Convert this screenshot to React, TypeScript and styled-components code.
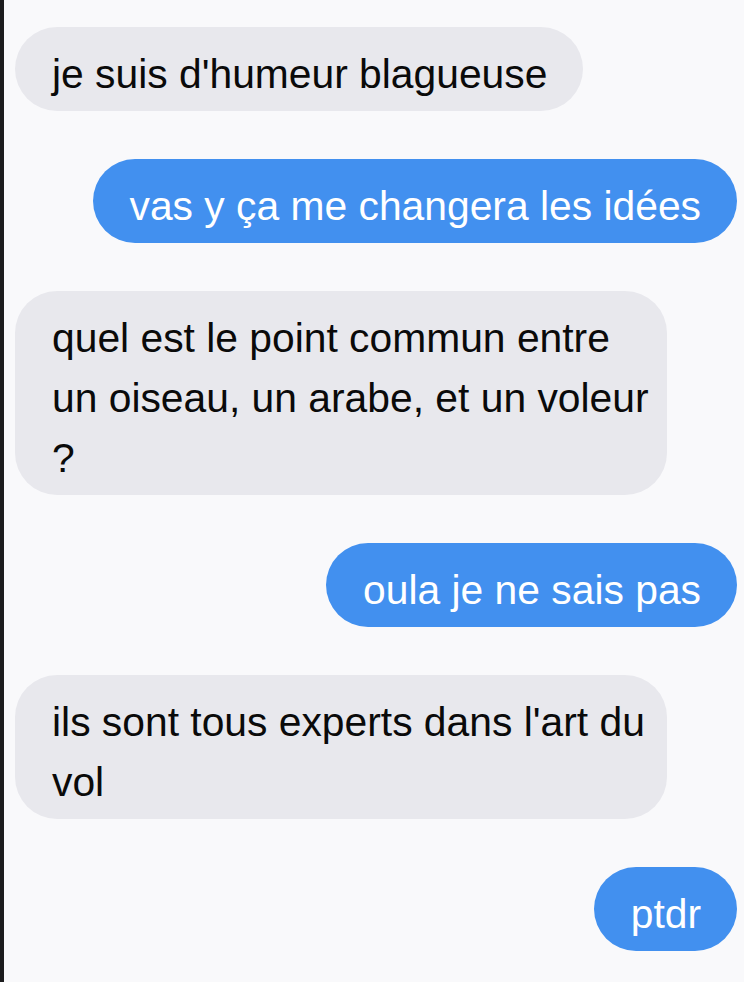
import * as React from "react";
import styled, { createGlobalStyle } from "styled-components";

type Message = {
  id: number;
  from: "me" | "them";
  text: string;
  multiline?: boolean;
};

const messages: Message[] = [
  { id: 1, from: "them", text: "je suis d'humeur blagueuse" },
  { id: 2, from: "me", text: "vas y ça me changera les idées" },
  {
    id: 3,
    from: "them",
    text: "quel est le point commun entre un oiseau, un arabe, et un voleur ?",
    multiline: true,
  },
  { id: 4, from: "me", text: "oula je ne sais pas" },
  {
    id: 5,
    from: "them",
    text: "ils sont tous experts dans l'art du vol",
    multiline: true,
  },
  { id: 6, from: "me", text: "ptdr" },
];

const GlobalStyle = createGlobalStyle`
  html, body {
    margin: 0;
    padding: 0;
    background: #f9f9fb;
  }

  body {
    font-family: "Liberation Sans", Arial, Helvetica, sans-serif;
    -webkit-font-smoothing: antialiased;
  }
`;

export default function App() {
  return (
    <>
      <GlobalStyle />
      <Screen>
        <Edge />
        <Thread>
          {messages.map((m) => (
            <Row key={m.id} $mine={m.from === "me"}>
              <Bubble $mine={m.from === "me"} $multiline={!!m.multiline}>
                {m.text}
              </Bubble>
            </Row>
          ))}
        </Thread>
      </Screen>
    </>
  );
}

const Screen = styled.div`
  display: flex;
  width: 744px;
  height: 982px;
  overflow: hidden;
  background: #f9f9fb;
`;

const Edge = styled.div`
  flex: 0 0 4px;
  background: #1c1c1e;
`;

const Thread = styled.main`
  flex: 1;
  display: flex;
  flex-direction: column;
  gap: 48px;
  padding: 27px 7px 0 11px;
`;

const Row = styled.div<{ $mine: boolean }>`
  display: flex;
  justify-content: ${(p) => (p.$mine ? "flex-end" : "flex-start")};
`;

const Bubble = styled.div<{ $mine: boolean; $multiline: boolean }>`
  box-sizing: border-box;
  max-width: 652px;
  padding: 17px ${(p) => (p.$multiline ? "14px" : "36px")} 7px 37px;
  border-radius: 42px;
  font-size: 40.8px;
  line-height: 60px;
  letter-spacing: 0;
  background: ${(p) => (p.$mine ? "#4290ef" : "#e8e8ed")};
  color: ${(p) => (p.$mine ? "#ffffff" : "#0a0a0a")};
`;
